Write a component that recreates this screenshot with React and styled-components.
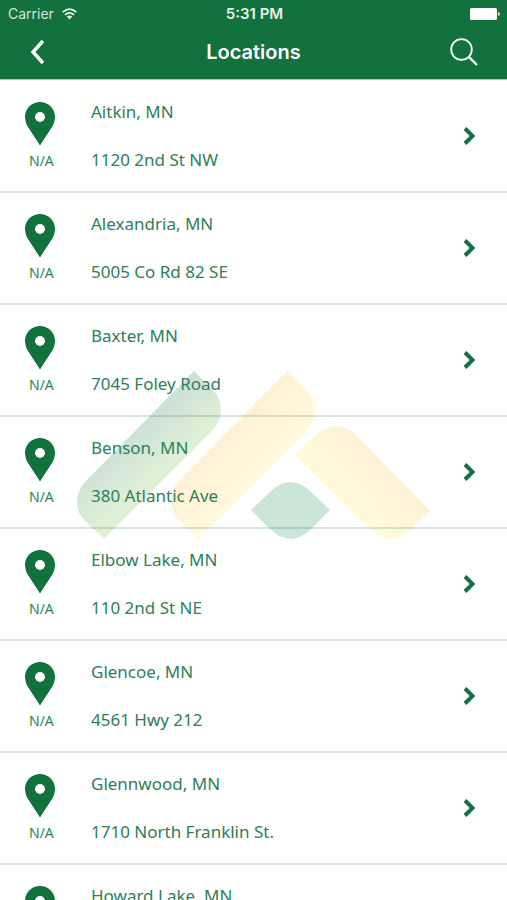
import { useState } from 'react'
import styled, { createGlobalStyle } from 'styled-components'


const GlobalStyle = createGlobalStyle`
	* {
		box-sizing: border-box;
	}

	body {
		margin: 0;
		background-color: #fff;
		font-family: 'Noto Sans', 'Open Sans', sans-serif;
	}
`

const Screen = styled.div`
	display: flex;
	flex-direction: column;
	height: 100vh;
	overflow: hidden;
`

const Header = styled.header`
	flex-shrink: 0;
	background-color: #13713d;
	border-bottom: 1px solid #a9cdb8;
	color: #fff;
	font-family: Inter, 'Liberation Sans', sans-serif;
`

const StatusBar = styled.div`
	display: grid;
	grid-template-columns: 1fr auto 1fr;
	align-items: center;
	height: 27px;
	padding: 0 6px 0 8px;
	line-height: 16px;
`

const Carrier = styled.span`
	display: flex;
	align-items: center;
	gap: 8px;
	font-size: 14px;
	color: #d3e6da;
`

const Clock = styled.span`
	font-weight: 600;
	font-size: 15px;
	color: #e8f3ec;
`

const Battery = styled.svg`
	justify-self: end;
`

const NavBar = styled.div`
	display: grid;
	grid-template-columns: 1fr auto 1fr;
	align-items: center;
	height: 52px;
	padding: 0 29px 2px;
`

const Title = styled.h1`
	margin: 0;
	font-size: 20px;
	font-weight: 600;
	line-height: 24px;
`

const IconButton = styled.button`
	display: flex;
	justify-self: ${props => props.$end ? 'end' : 'start'};
	padding: 0;
	border: 0;
	background: none;
	color: #fff;
	cursor: pointer;
`

const Content = styled.main`
	position: relative;
	flex: 1;
	min-height: 0;
`

const Watermark = styled.svg`
	position: absolute;
	top: 291px;
	left: 50%;
	transform: translateX(-50%);
`

const List = styled.ul`
	position: relative;
	height: 100%;
	margin: 0;
	padding: 1px 0 0;
	list-style: none;
	overflow-y: auto;
	scrollbar-width: none;
`

const Row = styled.a`
	display: flex;
	align-items: center;
	height: 112px;
	padding: 0 31px 0 25px;
	border-bottom: 2px solid rgba(19, 95, 80, 0.17);
	color: #2d8057;
	text-decoration: none;
`

const Marker = styled.span`
	display: flex;
	flex-direction: column;
	align-items: flex-start;
	gap: 6px;
	width: 66px;
`

const Distance = styled.span`
	padding-left: 4px;
	font-size: 14px;
	line-height: 18px;
`

const Details = styled.span`
	display: flex;
	flex: 1;
	flex-direction: column;
	gap: 24px;
	font-size: 17px;
	line-height: 24px;
`


const locations = [
	{ city: 'Aitkin, MN', street: '1120 2nd St NW' },
	{ city: 'Alexandria, MN', street: '5005 Co Rd 82 SE' },
	{ city: 'Baxter, MN', street: '7045 Foley Road' },
	{ city: 'Benson, MN', street: '380 Atlantic Ave' },
	{ city: 'Elbow Lake, MN', street: '110 2nd St NE' },
	{ city: 'Glencoe, MN', street: '4561 Hwy 212' },
	{ city: 'Glennwood, MN', street: '1710 North Franklin St.' },
	{ city: 'Howard Lake, MN', street: '' },
]


function Logo() {
	return (
		<Watermark width="356" height="170" viewBox="0 0 356 170" aria-hidden="true">
			<defs>
				<linearGradient id="green" gradientUnits="userSpaceOnUse" x1="62" y1="56" x2="94" y2="92">
					<stop offset="0" stopColor="#cbe1d6" />
					<stop offset="1" stopColor="#e0f0d5" />
				</linearGradient>
				<linearGradient id="gold" gradientUnits="userSpaceOnUse" x1="150" y1="60" x2="186" y2="96">
					<stop offset="0" stopColor="#fff0d6" />
					<stop offset="1" stopColor="#fff9db" />
				</linearGradient>
				<linearGradient id="goldRight" gradientUnits="userSpaceOnUse" x1="316" y1="102" x2="282" y2="136">
					<stop offset="0" stopColor="#fff0d8" />
					<stop offset="1" stopColor="#fffada" />
				</linearGradient>
			</defs>
			<path fill="url(#green)" d="M118 0L137 19Q145 27 145 39Q145 51 136 60L28 168L9 150Q1 142 1 132Q1 120 9 111Z" />
			<path fill="url(#gold)" d="M211 0L231 20Q239 28 239 39Q239 51 231 59L122 168L103 150Q95 142 95 131Q95 119 103 110Z" />
			<path fill="url(#goldRight)" d="M219 84L241 63Q250 55 260 55Q271 55 281 65L354 140L336 157Q325 168 314 168Q303 168 293 157Z" />
			<path fill="#cae6d8" d="M175 139L194 121Q204 111 214 111Q225 111 235 121L254 139L236 157Q225 168 215 168Q204 168 193 157Z" />
		</Watermark>
	)
}

function LocationRow({ city, street }) {
	return (
		<li>
			<Row href="#">
				<Marker>
					<svg width="30" height="44" viewBox="0 0 30 44" aria-hidden="true">
						<path fill="#13713d" fillRule="evenodd" d="M15 0C6.700 0 0 6.500 0 15C0 18.500 1.300 22 3 25L15 43.500L27 25C28.700 22 30 18.500 30 15C30 6.500 23.300 0 15 0ZM15 10A5 5 0 1 1 15 20A5 5 0 1 1 15 10Z" />
					</svg>
					<Distance>N/A</Distance>
				</Marker>
				<Details>
					<span>{city}</span>
					<span>{street || '\u00a0'}</span>
				</Details>
				<svg width="13" height="20" viewBox="0 0 13 20" aria-hidden="true">
					<path fill="none" stroke="#13713d" strokeWidth="4" d="M2 2.500L9.500 10L2 17.500" />
				</svg>
			</Row>
		</li>
	)
}

function App() {
	const [Searching, setSearching] = useState(false)

	return (
		<>
			<GlobalStyle />
			<Screen>
				<Header>
					<StatusBar>
						<Carrier>
							Carrier
							<svg width="15" height="12" viewBox="0 0 15 12" aria-hidden="true">
								<g fill="none" stroke="#e8f3ec" strokeWidth="1.800">
									<path d="M0.700 4.200Q7.500 -2 14.300 4.200" />
									<path d="M3 6.900Q7.500 2.800 12 6.900" />
								</g>
								<path fill="#e8f3ec" d="M4.700 8.600Q7.500 6.300 10.300 8.600L7.500 11.500Z" />
							</svg>
						</Carrier>
						<Clock>5:31 PM</Clock>
						<Battery width="31" height="12" viewBox="0 0 31 12" aria-hidden="true">
							<rect width="27" height="12" rx="1.500" fill="#fff" />
							<path fill="#d3e6da" d="M28 4Q30 4.500 30 6Q30 7.500 28 8Z" />
						</Battery>
					</StatusBar>
					<NavBar>
						<IconButton type="button" aria-label="Back">
							<svg width="18" height="28" viewBox="3 0 18 28" aria-hidden="true">
								<path fill="none" stroke="currentColor" strokeWidth="3.400" d="M17 3L7 14L17 25" />
							</svg>
						</IconButton>
						<Title>Locations</Title>
						<IconButton
							type="button"
							aria-label="Search"
							aria-pressed={Searching}
							onClick={() => { setSearching(!Searching) }}
							$end
						>
							<svg width="28" height="28" viewBox="0 0 28 28" aria-hidden="true">
								<g fill="none" stroke="currentColor">
									<circle cx="11.500" cy="11.500" r="10.300" strokeWidth="1.800" />
									<path strokeWidth="2.400" d="M18.800 18.800L27 27" />
								</g>
							</svg>
						</IconButton>
					</NavBar>
				</Header>
				<Content>
					<Logo />
					<List>
						{locations.map(location => (
							<LocationRow key={location.city} {...location} />
						))}
					</List>
				</Content>
			</Screen>
		</>
	)
}

export default App
